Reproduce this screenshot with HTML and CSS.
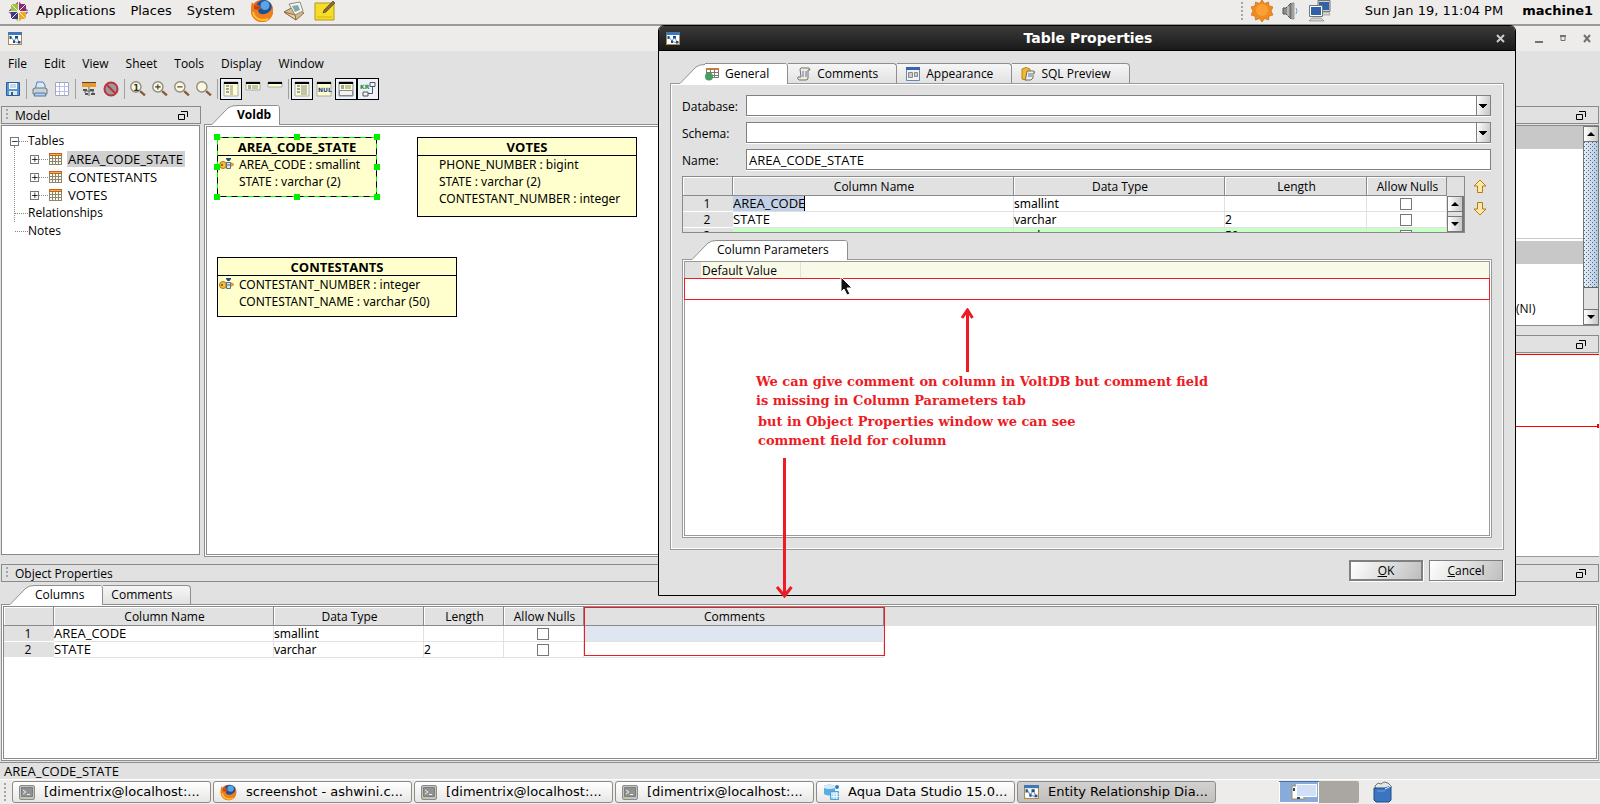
FILE: index.html
```html
<!DOCTYPE html>
<html lang="en">
<head>
	<meta charset="UTF-8">
	<title>Entity Relationship Diagram</title>
	<meta name="viewport" content="width=device-width, initial-scale=1.0">
	<link rel="stylesheet" href="styles.css">
</head>
<body>
	<!-- shared icons -->
	<svg class="defs" aria-hidden="true">
		<symbol id="er" viewBox="0 0 14 13">
			<path d="M0 0h14v13H0z" fill="#b08a4c"/>
			<path d="M0 0h14v3H0z" fill="#3f78b8"/>
			<path d="M1 3h12v9H1z" fill="#fff"/>
			<path d="M3 5l3 4M8 6l-2 3M9 6l2 4M5 9l6 2" stroke="#6d93bb" fill="none"/>
			<path d="M1.500 4h2v3h-2zM7 4h3v2.500H7zM5 8.500h2v2.500H5zM10 9h2.500v2.500H10z" fill="#1c4f86"/>
		</symbol>
		<symbol id="tbl" viewBox="0 0 13 12">
			<path d="M0 0h13v12H0z" fill="#8d8672"/>
			<path d="M0 0h13v3H0z" fill="#c4621c"/>
			<path d="M1 1h11v1H1z" fill="#f3b24a"/>
			<path d="M1 3h2v2H1zm3 0h2v2H4zm3 0h2v2H7zm3 0h2v2h-2zM1 6h2v2H1zm3 0h2v2H4zm3 0h2v2H7zm3 0h2v2h-2zM1 9h2v2H1zm3 0h2v2H4zm3 0h2v2H7zm3 0h2v2h-2z" fill="#fbfbe9"/>
		</symbol>
		<symbol id="key" viewBox="0 0 15 12">
			<circle cx="4" cy="7" r="3.500" fill="#f3c13a" stroke="#a9741b"/>
			<circle cx="3" cy="7" r="1" fill="#7a4d0c"/>
			<path d="M7 5h6l2 1.500L13 8H7z" fill="#e8ae2d" stroke="#a9741b" stroke-width=".6"/>
			<path d="M7 0h5v1l-1.500 2h-2L7 1z" fill="#1f4a86"/>
			<path d="M7.500 4.500h4v6h-4z" fill="#dfe5ee" stroke="#5d6d86"/>
			<path d="M8 7h3" stroke="#5d6d86"/>
		</symbol>
		<symbol id="float" viewBox="0 0 10 9">
			<path d="M.5 3.500h6v5h-6zM3 .5h6.500V6" fill="none" stroke="#000"/>
		</symbol>
		<symbol id="term" viewBox="0 0 16 15">
			<rect x=".5" y=".5" width="15" height="14" rx="1.500" fill="#c3c4c1" stroke="#8b8c89"/>
			<path d="M2.500 2.500h11v9h-11z" fill="#8f928e" stroke="#7d7f79"/>
			<path d="M4 5l3 2-3 2M8 9.500h3" stroke="#eef" fill="none"/>
			<path d="M2 13h2" stroke="#9d4"/>
		</symbol>
		<symbol id="fox" viewBox="0 0 24 24">
			<circle cx="12" cy="12" r="11" fill="#e0661c"/>
			<circle cx="14" cy="9.500" r="8.500" fill="#1f4f96"/>
			<circle cx="15" cy="6.500" r="4.500" fill="#58a6e6"/>
			<path d="M2 3c1 2 3 3 6 3l3 3-3 2c0 5 7 6 12 1 2-2 2-5 1-8 4 7 2 15-4 18C9 25 1 20 1 12c0-4 0-6 1-9z" fill="#ef7f1b"/>
			<path d="M3 13c1 6 8 10 15 7" stroke="#fcc231" stroke-width="2" fill="none"/>
			<path d="M4 6l5 1 2 2-4 2-3-1z" fill="#c8430f"/>
		</symbol>
		<symbol id="up" viewBox="0 0 8 4"><path d="M4 0l4 4H0z"/></symbol>
		<symbol id="down" viewBox="0 0 8 4"><path d="M0 0h8L4 4z"/></symbol>
		<symbol id="lens" viewBox="0 0 15 15">
			<path d="M9.500 9.500l4.500 4" stroke="#8b5a38" stroke-width="2.200"/>
			<circle cx="5.500" cy="5.500" r="4.800" fill="#fbf8dd" stroke="#8f8c84" stroke-width="1.300"/>
		</symbol>
		<symbol id="slant" viewBox="0 0 26 20">
			<path d="M0 20L17 3Q20 .5 26 .5V20z" fill="#fff"/>
			<path d="M0 19.500h1L17 3Q20 .5 26 .5" fill="none" stroke="#8e8e8e"/>
		</symbol>
	</svg>

	<header class="panel">
		<svg class="distro" viewBox="0 0 21 21">
			<path d="M10.500 0l3 3h-6zM0 10.500l3-3v6z" fill="#b6478f"/>
			<path d="M10.500 21l3-3h-6z" fill="#9ac53c"/><path d="M21 10.500l-3-3v6z" fill="#7c6fae"/>
			<path d="M3 3h7v7H3z" fill="#9ac53c"/><path d="M11 3h7v7h-7z" fill="#8d2a6d"/>
			<path d="M3 11h7v7H3z" fill="#3a3b86"/><path d="M11 11h7v7h-7z" fill="#efa724"/>
			<path d="M3 3l15 15M18 3L3 18M10.500 0v21M0 10.500h21" stroke="#edeceb"/>
		</svg>
		<nav class="panel_menu">
			<a href="#">Applications</a>
			<a href="#">Places</a>
			<a href="#">System</a>
		</nav>
		<a class="launch" href="#" aria-label="Firefox"><svg width="24" height="24"><use href="#fox"/></svg></a>
		<a class="launch" href="#" aria-label="Mail">
			<svg width="22" height="20" viewBox="0 0 22 20">
				<path d="M1 11l9-5 11 6-8 7z" fill="#d9b98a" stroke="#8d6f45"/>
				<path d="M6 3l11-2 3 9-8 4z" fill="#f4f4f2" stroke="#8b8b86"/>
				<path d="M9 5l6-1 2 5-5 2z" fill="#7fa9a7"/>
				<path d="M1 11l11 3 1 5z" fill="#efd3a5" stroke="#8d6f45"/>
			</svg>
		</a>
		<a class="launch" href="#" aria-label="Notes">
			<svg width="22" height="20" viewBox="0 0 22 20">
				<path d="M1 2h19v17H1z" fill="#f7dd2b" stroke="#b59a0d"/>
				<path d="M3 16h15" stroke="#d3b60f"/>
				<path d="M9 12l1-3 9-9 2 2-9 9z" fill="#8a6a34" stroke="#4f3d1d" stroke-width=".6"/>
			</svg>
		</a>
		<div class="tray">
			<span class="grip"></span>
			<svg width="22" height="22" viewBox="0 0 22 22">
				<path d="M11 0l2.500 3.500 4-1.500.5 4 4 1-2 4 2 4-4 1-.5 4-4-1.500L11 22l-2.500-3.500-4 1.500-.5-4-4-1 2-4-2-4 4-1 .5-4 4 1.500z" fill="#f28b1d" stroke="#cc6a0c" stroke-width=".7"/>
				<circle cx="11" cy="10" r="6" fill="#f9a136"/>
			</svg>
			<svg width="18" height="18" viewBox="0 0 18 18">
				<path d="M1 6h3l5-5v16l-5-5H1z" fill="#8d8f8b" stroke="#565752"/>
				<path d="M6 4v10" stroke="#ddd"/><path d="M10 1h2v16h-2z" fill="#b9bbb7" stroke="#6a6b67" stroke-width=".6"/>
				<path d="M14 6q2 3 0 6" stroke="#6fa0da" fill="none"/>
			</svg>
			<svg width="22" height="22" viewBox="0 0 22 22">
				<path d="M9.500 1.500h11v9h-11z" fill="#2f62a8" stroke="#d0d0cc"/><path d="M9 .5h12v11H9z" fill="none" stroke="#777"/><path d="M12 12h8l1 3H12z" fill="#d5d6d2" stroke="#888" stroke-width=".6"/>
				<path d="M1.500 6.500h11v9h-11z" fill="#2f62a8" stroke="#fff"/><path d="M.5 5.500h13v11H.5z" fill="none" stroke="#777"/>
				<path d="M3 18h9l3 3H0z" fill="#d5d6d2" stroke="#777" stroke-width=".6"/>
			</svg>
			<time>Sun Jan 19, 11:04 PM</time>
			<b>machine1</b>
		</div>
	</header>

	<main class="app">
		<div class="app_title">
			<svg width="14" height="13"><use href="#er"/></svg>
			<svg class="wm" width="58" height="11" viewBox="0 0 58 11">
				<path d="M0 8h8v2H0z" fill="#73726f"/>
				<path d="M26 3.500h4v4h-4z" fill="none" stroke="#73726f"/><path d="M25 2h6v2h-6z" fill="#73726f"/>
				<path d="M49 2l6 7M55 2l-6 7" stroke="#73726f" stroke-width="2"/>
			</svg>
		</div>
		<nav class="menubar">
			<a href="#">File</a><a href="#">Edit</a><a href="#">View</a><a href="#">Sheet</a><a href="#">Tools</a><a href="#">Display</a><a href="#">Window</a>
		</nav>
		<div class="toolbar">
			<button aria-label="Save"><svg viewBox="0 0 16 16"><path d="M1.500 1.500h13v13h-13z" fill="#5b93d6" stroke="#2b5c9e"/><path d="M4 2h8v6H4z" fill="#fff"/><path d="M5 4h6M5 6h6" stroke="#8db0da"/><path d="M4 10h8v4H4z" fill="#dfe8dd"/><path d="M6 11h2v3H6z" fill="#2b5c9e"/></svg></button>
			<i></i>
			<button aria-label="Print"><svg viewBox="0 0 16 16"><path d="M5 1h6l2 3v5H3z" fill="#d8e8f8" stroke="#4e80bb"/><path d="M1 8l2-1h10l2 1v5H1z" fill="#ccd1d6" stroke="#6c7680"/><path d="M3 12h10l1 3H2z" fill="#a9ccef" stroke="#5b7da3"/></svg></button>
			<button aria-label="Grid"><svg viewBox="0 0 16 16"><path d="M1 1h14v14H1z" fill="#fff"/><path d="M5.500 1v14M10.500 1v14M1 5.500h14M1 10.500h14" fill="none" stroke="#b7bbf2"/><path d="M1.500 1.500h13v13h-13z" fill="none" stroke="#a6a6b4"/></svg></button>
			<i></i>
			<button aria-label="Layout"><svg viewBox="0 0 16 16"><path d="M1 2h14v4H1z" fill="#ed9a24"/><path d="M1 1.500h14" stroke="#444"/><path d="M8 6v4M4 12v-2h8v2M8 10v5" stroke="#666" fill="none"/><path d="M2 8h4v2H2zM9 8h4v2H9zM4 12h3v2H4zM10 12h4v2h-4z" fill="#555"/></svg></button>
			<button aria-label="Stop"><svg viewBox="0 0 16 16"><circle cx="8" cy="8" r="6.500" fill="#9e9a9a" stroke="#b9343e" stroke-width="2"/><path d="M4 4l8 8" stroke="#b9343e" stroke-width="2"/></svg></button>
			<i></i>
			<button aria-label="Actual size"><svg viewBox="0 0 15 15"><use href="#lens"/><text x="3" y="9" class="glyph dark">1</text></svg></button>
			<button aria-label="Zoom in"><svg viewBox="0 0 15 15"><use href="#lens"/><path d="M3 5.500h5M5.500 3v5" stroke="#333"/></svg></button>
			<button aria-label="Zoom out"><svg viewBox="0 0 15 15"><use href="#lens"/><path d="M3 5.500h5" stroke="#333"/></svg></button>
			<button aria-label="Zoom"><svg viewBox="0 0 15 15"><use href="#lens"/></svg></button>
			<i></i>
			<button class="on" aria-label="Keys and columns"><svg viewBox="0 0 16 16"><path d="M1 1h14v14H1z" fill="#ffffce" stroke="#aaa"/><path d="M1 1h14v2H1z"/><path d="M3 5h3M3 8h3M3 11h3" stroke="#334f8c"/><path d="M7 5h3M7 7h3M7 9h3M7 11h3M7 13h3" stroke="#888"/></svg></button>
			<button aria-label="Keys"><svg viewBox="0 0 16 16"><path d="M1 1h14v8H1z" fill="#ffffce" stroke="#aaa"/><path d="M1 1h14v2H1z"/><path d="M3 5h3M3 7h3" stroke="#334f8c"/><path d="M7 5h6M7 7h6" stroke="#888"/></svg></button>
			<button aria-label="Names"><svg viewBox="0 0 16 16"><path d="M1 1h14v5H1z" fill="#ffffce" stroke="#aaa"/><path d="M1 1h14v2H1z"/></svg></button>
			<i></i>
			<button class="on" aria-label="Data types"><svg viewBox="0 0 16 16"><path d="M1 1h14v14H1z" fill="#ffffce" stroke="#aaa"/><path d="M1 1h14v2H1z"/><path d="M3 5h3M3 8h3M3 11h3" stroke="#334f8c"/><path d="M7 5h6M7 7h6M7 9h6M7 11h6M7 13h6" stroke="#888"/></svg></button>
			<button aria-label="Nulls"><svg viewBox="0 0 16 16"><path d="M1 1h14v14H1z" fill="#ffffce" stroke="#aaa"/><path d="M1 1h14v2H1z"/><text x="2" y="11" class="glyph">NUL</text></svg></button>
			<button class="on" aria-label="Indexes"><svg viewBox="0 0 16 16"><path d="M1 1h14v14H1z" fill="#ffffce" stroke="#888"/><path d="M1 1h14v2H1z"/><path d="M3 5h3M3 7h3" stroke="#334f8c"/><path d="M7 5h6M7 7h6" stroke="#888"/><path d="M1.500 9.500h13v5h-13z" fill="#f2f2f2" stroke="#888"/></svg></button>
			<button class="on" aria-label="Relations"><svg viewBox="0 0 16 16"><path d="M10 1.500h5v4h-5zM3 11h5v4H3z" fill="#f2f2f2" stroke="#555"/><path d="M12.500 6v6.500H8" fill="none" stroke="#555"/><text x="0" y="8" class="glyph green">KR</text></svg></button>
		</div>

		<div class="work">
			<section class="left">
				<div class="dock"><span class="grip"></span>Model<svg width="10" height="9"><use href="#float"/></svg></div>
				<div class="tree">
					<ul>
						<li><div class="node"><span class="exp">−</span><em></em>Tables</div>
							<ul>
								<li><div class="node"><span class="exp">+</span><em></em><svg width="13" height="12"><use href="#tbl"/></svg><span class="ident sel">AREA_CODE_STATE</span></div></li>
								<li><div class="node"><span class="exp">+</span><em></em><svg width="13" height="12"><use href="#tbl"/></svg><span class="ident">CONTESTANTS</span></div></li>
								<li><div class="node"><span class="exp">+</span><em></em><svg width="13" height="12"><use href="#tbl"/></svg><span class="ident">VOTES</span></div></li>
							</ul>
						</li>
						<li class="leaf"><div class="node"><em></em>Relationships</div></li>
						<li class="leaf"><div class="node"><em></em>Notes</div></li>
					</ul>
				</div>
			</section>

			<section class="sheet">
				<div class="tabs tabs_sheet"><button class="tab active"><svg class="slant" width="26" height="20"><use href="#slant"/></svg><b>Voldb</b></button></div>
				<div class="canvas">
					<div class="entity e_area">
						<h3>AREA_CODE_STATE</h3>
						<p><svg width="15" height="12"><use href="#key"/></svg>AREA_CODE : smallint</p>
						<p>STATE : varchar (2)</p>
						<svg class="handles" width="166" height="66" viewBox="0 0 166 66">
							<path d="M3.500 3.500h159v59H3.500z" fill="none" stroke="#000"/>
							<path d="M3.500 3.500h159v59H3.500z" fill="none" stroke="#0f0" stroke-dasharray="5 6"/>
							<path d="M0 0h6v6H0zM80 0h6v6h-6zM160 0h6v6h-6zM0 30h6v6H0zM160 30h6v6h-6zM0 60h6v6H0zM80 60h6v6h-6zM160 60h6v6h-6z" fill="#00f000"/>
						</svg>
					</div>
					<div class="entity e_votes">
						<h3>VOTES</h3>
						<p>PHONE_NUMBER : bigint</p>
						<p>STATE : varchar (2)</p>
						<p>CONTESTANT_NUMBER : integer</p>
					</div>
					<div class="entity e_cont">
						<h3>CONTESTANTS</h3>
						<p><svg width="15" height="12"><use href="#key"/></svg>CONTESTANT_NUMBER : integer</p>
						<p>CONTESTANT_NAME : varchar (50)</p>
					</div>
				</div>
			</section>

			<section class="right">
				<div class="dock"><svg width="10" height="9"><use href="#float"/></svg></div>
				<div class="legend">
					<div class="legend_list">
						<div class="band"></div>
						<div class="blank"></div>
						<div class="band"></div>
						<div class="item">(NI)</div>
					</div>
					<div class="scroll">
						<button aria-label="Up"><svg width="8" height="4"><use href="#up"/></svg></button>
						<div class="thumb"></div>
						<div class="track"></div>
						<button aria-label="Down"><svg width="8" height="4"><use href="#down"/></svg></button>
					</div>
				</div>
				<div class="dock"><svg width="10" height="9"><use href="#float"/></svg></div>
				<div class="overview"><div class="view"></div></div>
			</section>
		</div>

		<section class="props">
			<div class="dock"><span class="grip"></span>Object Properties<svg width="10" height="9"><use href="#float"/></svg></div>
			<div class="tabs tabs_props">
				<button class="tab active"><svg class="slant" width="26" height="20"><use href="#slant"/></svg><span>Columns</span></button>
				<button class="tab"><span>Comments</span></button>
			</div>
			<div class="props_pane">
				<div class="props_in">
					<table class="grid">
						<colgroup><col class="c_no"><col class="c_220"><col class="c_150"><col class="c_80"><col class="c_80"><col class="c_300"></colgroup>
						<thead><tr><th></th><th>Column Name</th><th>Data Type</th><th>Length</th><th>Allow Nulls</th><th>Comments</th></tr></thead>
						<tbody>
							<tr><th>1</th><td class="ident">AREA_CODE</td><td>smallint</td><td></td><td class="mid"><input type="checkbox" aria-label="Allow nulls 1"></td><td class="pick"></td></tr>
							<tr><th>2</th><td class="ident">STATE</td><td>varchar</td><td>2</td><td class="mid"><input type="checkbox" aria-label="Allow nulls 2"></td><td></td></tr>
						</tbody>
					</table>
					<div class="mark mark_comments"></div>
				</div>
			</div>
		</section>
		<footer class="status ident">AREA_CODE_STATE</footer>
	</main>

	<footer class="taskbar">
		<span class="grip"></span>
		<button><svg width="16" height="15"><use href="#term"/></svg>[dimentrix@localhost:...</button>
		<button><svg width="17" height="17"><use href="#fox"/></svg>screenshot - ashwini.c...</button>
		<button><svg width="16" height="15"><use href="#term"/></svg>[dimentrix@localhost:...</button>
		<button><svg width="16" height="15"><use href="#term"/></svg>[dimentrix@localhost:...</button>
		<button><svg width="16" height="16" viewBox="0 0 16 16"><path d="M1 2q5-3 11 0v8q-6 3-11 0z" fill="#58aee3"/><path d="M1 2q5-3 11 0v2Q6 6 1 4z" fill="#d9eaf5"/><path d="M7.500 7.500h8v8h-8z" fill="#a6d8f5" stroke="#4d9fd0"/><path d="M8 10h8M8 12.500h8M11 8v7M13.500 8v7" stroke="#fff" stroke-width=".7"/><circle cx="14" cy="3" r="2" fill="#2f7fc0"/></svg>Aqua Data Studio 15.0...</button>
		<button class="current"><svg width="15" height="14"><use href="#er"/></svg>Entity Relationship Dia...</button>
		<svg class="pager" width="80" height="22" viewBox="0 0 80 22">
			<rect width="80" height="22" rx="2" fill="#aaa6a2"/>
			<path d="M0 0h40v22H0z" fill="#88abd9"/><path d="M.5 1v20.500h39V1" fill="none" stroke="#fff"/><path d="M0 .5h40" stroke="#3f70b5"/>
			<path d="M13 5h12v13H13z" fill="#fff" stroke="#b08a4c"/><path d="M14 7h2v3h-2zM18 16h3v2h-3z" fill="#1c4f86"/>
			<path d="M17.500 3.500h20v12h-20z" fill="#d2e0f7" stroke="#fff"/>
		</svg>
		<svg class="trash" width="20" height="22" viewBox="0 0 20 22">
			<path d="M2 5l3-3 3 1 3-2 4 1 3 3-1 4H3z" fill="#e3e7e3" stroke="#6d756f"/>
			<path d="M1 7h11l6-2v14l-2 2H3l-2-2z" fill="#3b74c0" stroke="#204a87"/>
			<path d="M12 8l6-3" stroke="#fff"/><path d="M4 10h8" stroke="#6fa0de"/>
		</svg>
	</footer>

	<div class="dialog" role="dialog" aria-label="Table Properties">
		<div class="dialog_title">
			<svg width="14" height="13"><use href="#er"/></svg>
			<h2>Table Properties</h2>
			<button aria-label="Close"><svg width="9" height="9" viewBox="0 0 9 9"><path d="M1 1l7 7M8 1L1 8" stroke="#ccc" stroke-width="2"/></svg></button>
		</div>
		<form class="dialog_body" onsubmit="return false">
			<div class="tabs tabs_dialog">
				<button class="tab active"><svg class="slant" width="26" height="20"><use href="#slant"/></svg>
					<svg width="14" height="14" viewBox="0 0 14 14"><path d="M1.500 1.500h12v9h-12z" fill="#fff" stroke="#7b7a70"/><path d="M1 1h13v2H1z" fill="#cf7a3a"/><path d="M5.500 2v9M9.500 2v9M1 5.500h13M1 8.500h13" stroke="#7b7a70"/><circle cx="4" cy="9.500" r="4" fill="#45a05f"/></svg>
					<span>General</span></button>
				<button class="tab">
					<svg width="14" height="14" viewBox="0 0 14 14"><path d="M3 2q1-2 3-1h6l1 2h-2v8q0 2-2 2H2q-2-1-1-3h3z" fill="#eeece2" stroke="#77705c"/><path d="M5 5h5M5 7h5M5 9h5" stroke="#5574b8" stroke-dasharray="2 1"/></svg>
					<span>Comments</span></button>
				<button class="tab">
					<svg width="14" height="14" viewBox="0 0 14 14"><path d="M.5.5h13v13H.5z" fill="#f4f4f4" stroke="#6987b5"/><path d="M0 0h14v3H0z" fill="#3467ad"/><path d="M2.500 5.500h4v5h-4zM8.500 5.500h3v4h-3z" fill="#ccc" stroke="#888"/></svg>
					<span>Appearance</span></button>
				<button class="tab">
					<svg width="14" height="14" viewBox="0 0 14 14"><path d="M1 2q4-3 8 0v10q-4 2-8 0z" fill="#f0bb32" stroke="#b88312"/><path d="M6 4h7l1 2h-2v5l-2 2H4l1-3z" fill="#eeece2" stroke="#77705c"/><path d="M7 7h4M7 9h4" stroke="#5574b8"/></svg>
					<span>SQL Preview</span></button>
			</div>
			<div class="dialog_pane">
				<div class="field"><label for="db">Database:</label><select id="db"><option></option></select></div>
				<div class="field"><label for="schema">Schema:</label><select id="schema"><option></option></select></div>
				<div class="field"><label for="name">Name:</label><input id="name" class="ident" type="text" value="AREA_CODE_STATE"></div>
				<div class="cols">
					<div class="cols_box">
						<table class="grid">
							<colgroup><col class="c_no"><col class="c_280"><col class="c_210"><col class="c_142"><col class="c_80"></colgroup>
							<thead><tr><th></th><th>Column Name</th><th>Data Type</th><th>Length</th><th>Allow Nulls</th></tr></thead>
							<tbody>
								<tr><th>1</th><td><input class="edit ident" type="text" value="AREA_CODE" aria-label="Column name"></td><td>smallint</td><td></td><td class="mid"><input type="checkbox" aria-label="Allow nulls 1"></td></tr>
								<tr><th>2</th><td class="ident">STATE</td><td>varchar</td><td>2</td><td class="mid"><input type="checkbox" aria-label="Allow nulls 2"></td></tr>
								<tr class="new"><th>3</th><td></td><td>varchar</td><td>50</td><td class="mid"><input type="checkbox" aria-label="Allow nulls 3"></td></tr>
							</tbody>
						</table>
						<div class="scroll scroll_small">
							<button aria-label="Up"><svg width="8" height="4"><use href="#up"/></svg></button>
							<div class="track"></div>
							<button aria-label="Down"><svg width="8" height="4"><use href="#down"/></svg></button>
						</div>
					</div>
					<div class="order">
						<button aria-label="Move up"><svg width="14" height="15" viewBox="0 0 14 15"><path d="M7 1l6 6H9.500v6.500h-5V7H1z" fill="#fde9a6" stroke="#b87a14"/></svg></button>
						<button aria-label="Move down"><svg width="14" height="15" viewBox="0 0 14 15"><path d="M7 14l6-6H9.500V1.500h-5V8H1z" fill="#fde9a6" stroke="#b87a14"/></svg></button>
					</div>
				</div>
				<div class="tabs tabs_param"><button class="tab active"><svg class="slant" width="26" height="20"><use href="#slant"/></svg><span>Column Parameters</span></button></div>
				<div class="param">
					<div class="param_in">
						<div class="param_row"><i></i><span>Default Value</span><b></b></div>
						<div class="mark mark_param"></div>
					</div>
				</div>
			</div>
			<div class="actions">
				<button class="ok"><u>O</u>K</button>
				<button><u>C</u>ancel</button>
			</div>
		</form>
	</div>

	<p class="note note_1">We can give comment on column in VoltDB but comment field<br>is missing in Column Parameters tab</p>
	<p class="note note_2">but in Object Properties window we can see<br>comment field for column</p>
	<svg class="arrow arrow_up" width="14" height="64" viewBox="0 0 14 64"><path d="M7.500 2v62M2 10l5.500-8 5 8" fill="none" stroke="#ed1c24" stroke-width="3"/></svg>
	<svg class="arrow arrow_down" width="18" height="140" viewBox="0 0 18 140"><path d="M9.500 0v138M2 129l7.500 9 7-9" fill="none" stroke="#ed1c24" stroke-width="3"/></svg>
	<svg class="pointer" width="13" height="20" viewBox="0 0 13 20"><path d="M1 1v15l3-3 3 6 3-1-3-6h5z" fill="#111" stroke="#fff"/></svg>
</body>
</html>
```
FILE: styles.css
```css
* {
	box-sizing: border-box;
	margin: 0;
	padding: 0;
}
body {
	position: relative;
	display: flex;
	flex-direction: column;
	height: 100vh;
	overflow: hidden;
	background-color: #e1e1e1;
	color: #000;
	font: 12px/16px "Open Sans", "Noto Sans", sans-serif;
}
a {
	color: inherit;
	text-decoration: none;
}
button, input, select {
	font: inherit;
	color: inherit;
}
button {
	border: 0;
	background: none;
}
ul {
	list-style: none;
}
.defs {
	position: absolute;
	width: 0;
	height: 0;
}
svg {
	flex: none;
}
.grip {
	flex: none;
	width: 4px;
	height: 12px;
	background: radial-gradient(circle at 1px 1px, #a5a5a5 1px, transparent 1px) 0 0 / 4px 4px;
}
.entity p, .grid td {
	font-family: "Noto Sans", "Open Sans", sans-serif;
}
.ident {
	font-size: 13px;
}

/* desktop panel */
.panel {
	flex: none;
	display: flex;
	align-items: center;
	height: 26px;
	padding: 0 7px 2px 8px;
	border-bottom: 2px solid #9c9a97;
	background-color: #edeceb;
	font: 13px/22px "DejaVu Sans", sans-serif;
}
.distro {
	width: 21px;
	height: 21px;
	margin-right: 7px;
}
.panel_menu {
	display: flex;
	gap: 15px;
	margin-right: 15px;
}
.launch {
	display: flex;
	margin-right: 9px;
}
.tray {
	display: flex;
	align-items: center;
	gap: 9px;
	margin-left: auto;
}
.tray .grip {
	height: 18px;
	margin-right: -3px;
}
.tray time {
	margin-left: 25px;
}
.tray b {
	margin-left: 10px;
}

/* application window */
.app {
	flex: 1;
	display: flex;
	flex-direction: column;
	min-height: 0;
}
.app_title {
	flex: none;
	display: flex;
	align-items: center;
	height: 25px;
	padding: 0 7px 0 8px;
	background-color: #edeceb;
}
.wm {
	margin-left: auto;
}
.menubar {
	flex: none;
	display: flex;
	gap: 17px;
	height: 26px;
	padding: 0 8px;
	line-height: 26px;
}
.toolbar {
	flex: none;
	display: flex;
	align-items: center;
	height: 27px;
	padding: 0 2px 3px;
}
.toolbar button {
	display: flex;
	align-items: center;
	justify-content: center;
	width: 22px;
	height: 22px;
}
.toolbar svg {
	width: 16px;
	height: 16px;
}
.toolbar .on {
	border: 1px solid #000;
	background-color: #edf2fa;
}
.toolbar i {
	width: 1px;
	height: 20px;
	margin: 0 2px;
	background-color: #a0a0a0;
}
.glyph {
	font: bold 6px "DejaVu Sans", sans-serif;
	fill: #26447f;
}
.glyph.dark {
	font-size: 8px;
	fill: #333;
}
.glyph.green {
	fill: #218a3c;
}
.work {
	flex: 1;
	display: grid;
	grid-template-columns: 201px 1fr 300px;
	column-gap: 3px;
	min-height: 0;
	padding-bottom: 7px;
}
.dock {
	flex: none;
	display: flex;
	align-items: center;
	height: 18px;
	margin: 0 1px 0 1px;
	padding: 0 12px 0 4px;
	border: 1px solid #8a8a8a;
	gap: 5px;
	line-height: 17px;
}
.left .dock {
	margin-right: 0;
}
.dock svg {
	margin-left: auto;
}
.left, .sheet, .right {
	display: flex;
	flex-direction: column;
	min-width: 0;
	min-height: 0;
}
.left, .right {
	padding-top: 2px;
}
.tree {
	flex: 1;
	margin: 1px 1px 2px 1px;
	padding: 6px 0 0 8px;
	border: 1px solid #8a8a8a;
	background-color: #fff;
}
.tree li {
	position: relative;
}
.node {
	display: flex;
	align-items: center;
	height: 18px;
}
.node svg {
	margin: 0 5px 0 1px;
}
.node .sel {
	background-color: #d0d0d0;
}
.node .ident {
	padding: 0 2px 0 1px;
}
.tree ul ul {
	padding-left: 20px;
}
.tree ul ul::before {
	content: "";
	position: absolute;
	top: 14px;
	left: 4px;
	height: 76px;
	border-left: 1px dotted #888;
}
.exp {
	flex: none;
	width: 9px;
	height: 9px;
	border: 1px solid #777;
	background-color: #fff;
	font: 9px/7px "DejaVu Sans", sans-serif;
	text-align: center;
}
.node em {
	width: 9px;
	border-top: 1px dotted #888;
}
.leaf .node {
	padding-left: 5px;
}
.leaf .node em {
	width: 13px;
}

/* tabs */
.tabs {
	position: relative;
	z-index: 1;
	flex: none;
	display: flex;
	height: 20px;
	margin-bottom: -1px;
}
.tab {
	display: flex;
	align-items: center;
	gap: 6px;
	height: 19px;
	border: 1px solid #8e8e8e;
	border-left: 0;
	border-bottom: 0;
	border-radius: 0 4px 0 0;
	background: linear-gradient(#f6f6f6, #e2e2e2);
}
.tab.active {
	height: 20px;
	background: linear-gradient(#8e8e8e, #8e8e8e) 26px 0 / 100% 1px no-repeat, linear-gradient(to right, transparent 26px, #fff 26px);
	border-top: 0;
}
.slant {
	margin-right: -6px;
}
.tabs_sheet {
	height: 21px;
	padding: 1px 0 0 7px;
}
.tabs_sheet b {
	padding: 0 8px 0 0;
}
.canvas {
	position: relative;
	flex: 1;
	border: 1px solid #8e8e8e;
	box-shadow: inset 0 0 0 1px #fff, inset 0 0 0 2px #8e8e8e;
	background-color: #fff;
}

/* diagram */
.entity {
	position: absolute;
	border: 1px solid #000;
	background-color: #ffffce;
}
.entity h3 {
	height: 18px;
	border-bottom: 1px solid #000;
	font-size: 13px;
	line-height: 18px;
	text-align: center;
}
.entity p {
	position: relative;
	padding-left: 21px;
	line-height: 17px;
	white-space: nowrap;
}
.entity p svg {
	position: absolute;
	top: 2px;
	left: 1px;
}
.e_area {
	top: 12px;
	left: 12px;
	width: 160px;
	height: 60px;
}
.e_votes {
	top: 12px;
	left: 212px;
	width: 220px;
	height: 80px;
}
.e_cont {
	top: 132px;
	left: 12px;
	width: 240px;
	height: 60px;
}
.handles {
	position: absolute;
	top: -4px;
	left: -4px;
}

/* right side */
.legend {
	flex: none;
	display: flex;
	height: 201px;
	margin: 1px 1px 9px 0;
	border-top: 1px solid #8a8a8a;
	border-bottom: 1px solid #8a8a8a;
	background-color: #fff;
}
.legend_list {
	flex: 1;
	padding-bottom: 4px;
	overflow: hidden;
}
.band {
	height: 23px;
	background-color: #c8c8c8;
}
.blank {
	height: 90px;
	margin-bottom: 2px;
	border-bottom: 1px solid #c8c8c8;
}
.item {
	padding: 37px 0 0 216px;
}
.scroll {
	flex: none;
	display: flex;
	flex-direction: column;
	width: 16px;
	border: 1px solid #777;
	background-color: #e1e1e1;
}
.scroll button {
	display: flex;
	align-items: center;
	justify-content: center;
	height: 15px;
	border-bottom: 1px solid #777;
	background: linear-gradient(90deg, #fff, #c8c8c8);
}
.scroll button:last-child {
	border-top: 1px solid #777;
	border-bottom: 0;
}
.thumb {
	height: 146px;
	border-bottom: 1px solid #666;
	background: linear-gradient(#667788, #667788) 0 0 / 1px 1px, linear-gradient(90deg, #e6eff8, #b4cbe4);
	background: conic-gradient(from 270deg at 1px 1px, #556677 90deg, transparent 0) 0 0 / 4px 4px, conic-gradient(from 270deg at 1px 1px, #556677 90deg, transparent 0) 2px 2px / 4px 4px, linear-gradient(90deg, #e6eff8, #b4cbe4);
}
.track {
	flex: 1;
}
.overview {
	flex: 1;
	margin: 1px 1px 0 0;
	border-top: 1px solid #f00;
	border-bottom: 1px solid #999;
	background-color: #fff;
}
.view {
	position: relative;
	height: 72px;
	border-bottom: 1px solid #f00;
}
.view::after {
	content: "";
	position: absolute;
	right: 0;
	bottom: -2px;
	width: 2px;
	height: 4px;
	background-color: #f00;
}

/* tables */
.grid {
	flex: none;
	table-layout: fixed;
	border-collapse: separate;
	border-spacing: 0;
	width: 0;
}
.c_no { width: 50px; }
.c_80 { width: 80px; }
.c_142 { width: 142px; }
.c_150 { width: 150px; }
.c_210 { width: 211px; }
.c_220 { width: 220px; }
.c_280 { width: 281px; }
.c_300 { width: 300px; }
.grid th {
	font-weight: normal;
	background-color: #e1e1e1;
}
.grid thead th {
	height: 19px;
	padding: 2px 0 0 2px;
	border-right: 1px solid #8a8a8a;
	border-bottom: 1px solid #8a8a8a;
	box-shadow: inset 1px 1px #fff;
}
.grid tbody th, .grid td {
	height: 16px;
	border-bottom: 1px solid #e1e1e1;
	line-height: 15px;
	white-space: nowrap;
}
.grid tbody th {
	padding-right: 2px;
	border-bottom-color: #fff;
}
.grid td {
	border-right: 1px solid #e1e1e1;
	background-color: #fff;
}
.grid .ident {
	font-family: "Open Sans", sans-serif;
}
.grid .mid {
	padding-right: 2px;
	text-align: center;
	line-height: 0;
}
.grid .pick {
	background-color: #dfe6f2;
}
.grid .new td {
	background-color: #c8ffc8;
}
.grid input[type=checkbox] {
	appearance: none;
	width: 12px;
	height: 12px;
	border: 1px solid #777;
	background-color: #fff;
	vertical-align: top;
}
.edit {
	display: block;
	width: 72px;
	height: 15px;
	border: 0;
	border-right: 1px solid #000;
	background-color: #c2d1e6;
}

/* object properties */
.props {
	flex: none;
	display: flex;
	flex-direction: column;
	height: 197px;
}
.tabs_props {
	margin-top: 3px;
	padding-left: 9px;
}
.tabs_props .active span {
	padding-right: 18px;
}
.tabs_props .tab:last-child {
	padding: 0 18px 0 8px;
}
.props_pane {
	flex: 1;
	margin: 0 1px;
	padding: 1px;
	border: 1px solid #8e8e8e;
	background-color: #fff;
}
.props_in {
	position: relative;
	height: 100%;
	border: 1px solid #8a8a8a;
	background: linear-gradient(#e1e1e1 19px, #fff 19px);
}
.mark {
	border: 1px solid #ed1c24;
}
.mark_comments {
	position: absolute;
	top: 0;
	left: 580px;
	width: 301px;
	height: 49px;
}
.status {
	flex: none;
	height: 17px;
	margin-top: 1px;
	padding-left: 4px;
	border-top: 1px solid #8e8e8e;
	line-height: 17px;
}

/* task bar */
.taskbar {
	flex: none;
	display: flex;
	align-items: center;
	gap: 2px;
	height: 25px;
	padding: 0 4px;
	border-top: 1px solid #fff;
	background-color: #edeceb;
	font: 13px/20px "DejaVu Sans", sans-serif;
}
.taskbar .grip {
	height: 18px;
	margin-right: 2px;
}
.taskbar button {
	display: flex;
	align-items: center;
	gap: 9px;
	width: 199px;
	height: 22px;
	padding: 0 6px;
	border: 1px solid #8f8b87;
	border-radius: 3px;
	background: linear-gradient(#fff, #e8e7e6);
	white-space: nowrap;
}
.taskbar .current {
	background: linear-gradient(#d3d1cf, #c2c0bd);
}
.pager {
	margin-left: 61px;
}
.trash {
	margin-left: 12px;
}

/* dialog */
.dialog {
	position: absolute;
	top: 25px;
	right: 84px;
	bottom: 208px;
	left: 658px;
	z-index: 2;
	display: flex;
	flex-direction: column;
	border: 1px solid #000;
	border-radius: 6px 6px 0 0;
	background-color: #e1e1e1;
}
.dialog_title {
	flex: none;
	display: flex;
	align-items: center;
	height: 25px;
	padding: 0 10px 0 7px;
	border-bottom: 1px solid #000;
	border-radius: 5px 5px 0 0;
	background: linear-gradient(#3a3a3a, #1a1a1a);
	color: #fff;
}
.dialog_title h2 {
	flex: 1;
	font: bold 14px/24px "DejaVu Sans", sans-serif;
	text-align: center;
}
.dialog_title button {
	display: flex;
}
.dialog_body {
	flex: 1;
	display: flex;
	flex-direction: column;
	min-height: 0;
	padding: 12px 11px 14px;
}
.tabs_dialog {
	height: 21px;
	padding-left: 9px;
}
.tabs_dialog .tab {
	height: 20px;
	padding: 0 18px 0 9px;
}
.tabs_dialog .active {
	height: 21px;
	padding-left: 0;
}
.dialog_pane {
	flex: 1;
	display: flex;
	flex-direction: column;
	min-height: 0;
	padding: 11px 12px 11px 11px;
	border: 1px solid #9a9a9a;
	box-shadow: inset 1px 1px #fff, inset -1px -1px #fff;
}
.field {
	flex: none;
	display: flex;
	align-items: center;
	height: 21px;
	margin-bottom: 6px;
}
.field label {
	width: 64px;
	padding-top: 2px;
}
.field input, .field select {
	flex: 1;
	height: 21px;
	padding: 0 2px;
	border: 1px solid #808080;
	border-radius: 0;
	outline: 0;
	background-color: #fff;
	box-shadow: 0 1px #fff;
}
.field select {
	appearance: none;
	background-image: linear-gradient(#000, #000), linear-gradient(#000, #000), linear-gradient(#000, #000), linear-gradient(#000, #000), linear-gradient(#808080, #808080), linear-gradient(100deg, #fff, #c4c4c4);
	background-position: right 3px top 8px, right 4px top 9px, right 5px top 10px, right 6px top 11px, right 13px top 0, right 0 top 0;
	background-repeat: no-repeat;
	background-size: 8px 1px, 6px 1px, 4px 1px, 2px 1px, 1px 100%, 13px 100%;
}
.cols {
	flex: none;
	display: flex;
	height: 57px;
}
.cols_box {
	flex: 1;
	display: flex;
	overflow: hidden;
	border: 1px solid #8a8a8a;
}
.scroll_small {
	flex: 1;
	height: 36px;
	margin-top: 19px;
	border-right-width: 2px;
}
.order {
	flex: none;
	display: flex;
	flex-direction: column;
	align-items: center;
	gap: 7px;
	width: 22px;
	margin-left: 4px;
	padding-top: 3px;
}
.order button {
	display: flex;
}
.tabs_param {
	margin-top: 7px;
	padding-left: 9px;
}
.tabs_param span {
	padding: 0 18px 0 0;
}
.param {
	flex: 1;
	margin-right: -1px;
	padding: 1px;
	border: 1px solid #9a9a9a;
	background-color: #fff;
}
.param_in {
	height: 100%;
	border: 1px solid #9a9a9a;
}
.param_row {
	display: flex;
	height: 16px;
	background-color: #f9f9e8;
	line-height: 18px;
}
.param_row i {
	width: 16px;
	background-color: #e1e1e1;
}
.param_row span {
	width: 100px;
	padding-left: 1px;
	border-right: 1px solid #e1e1e1;
}
.mark_param {
	height: 22px;
	margin: 0 -1px;
}
.actions {
	flex: none;
	display: flex;
	justify-content: flex-end;
	gap: 6px;
	margin: 10px 1px 0 0;
}
.actions button {
	width: 74px;
	height: 21px;
	border: 1px solid #808080;
	background: linear-gradient(120deg, #fff, #d8d8d8 60%, #bebebe);
	box-shadow: 1px 1px #fff;
}
.actions .ok {
	border-width: 2px;
}

/* red remarks over the windows */
.note {
	position: absolute;
	z-index: 3;
	color: #ed1c24;
	font: bold 13px/19px "DejaVu Serif", serif;
	white-space: nowrap;
}
.note_1 {
	top: 372px;
	left: 756px;
}
.note_2 {
	top: 412px;
	left: 758px;
}
.arrow {
	position: absolute;
	z-index: 3;
}
.arrow_up {
	top: 308px;
	left: 960px;
}
.arrow_down {
	top: 458px;
	left: 775px;
}
.pointer {
	position: absolute;
	z-index: 3;
	top: 276px;
	left: 840px;
}
```
